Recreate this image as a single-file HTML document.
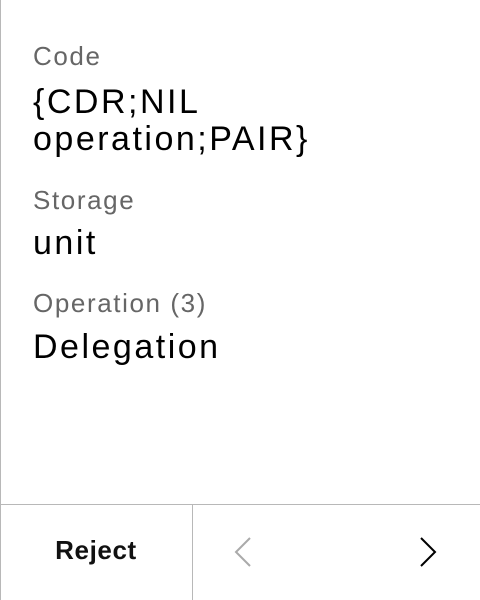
<!DOCTYPE html>
<html><head><style>
body{margin:0;width:480px;height:600px;background:#fff;font-family:"Liberation Sans",sans-serif;position:relative;overflow:hidden}
.l{position:absolute;left:0;top:0;width:1px;height:600px;background:#b8b8b8}
.t{position:absolute;left:33px;white-space:nowrap}
.lab{font-size:26px;color:#666;letter-spacing:1.6px}
.val{font-size:34px;color:#000;letter-spacing:2.5px}
.bar{position:absolute;left:0;top:504px;width:480px;height:1px;background:#b8b8b8}
.div{position:absolute;left:192px;top:504px;width:1px;height:96px;background:#b8b8b8}
.rej{position:absolute;left:0;width:192px;top:535px;text-align:center;font-size:26px;font-weight:bold;color:#111;letter-spacing:0.6px}
</style></head><body>
<div class="l"></div>
<div class="t lab" style="top:41px">Code</div>
<div class="t val" style="top:83px">{CDR;NIL</div>
<div class="t val" style="top:120px">operation;PAIR}</div>
<div class="t lab" style="top:185px">Storage</div>
<div class="t val" style="top:224px">unit</div>
<div class="t lab" style="top:288px">Operation (3)</div>
<div class="t val" style="top:328px">Delegation</div>
<div class="bar"></div><div class="div"></div>
<div class="rej">Reject</div>
<svg style="position:absolute;left:230px;top:534px" width="24" height="36"><path d="M20 4 L6 18 L20 32" fill="none" stroke="#aaa" stroke-width="2"/></svg>
<svg style="position:absolute;left:416px;top:534px" width="24" height="36"><path d="M5 4 L19 18 L5 32" fill="none" stroke="#000" stroke-width="2"/></svg>
</body></html>
